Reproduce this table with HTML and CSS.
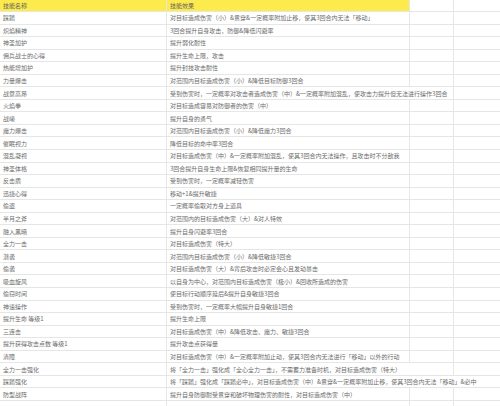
FILE: index.html
```html
<!DOCTYPE html>
<html lang="zh-CN">
<head>
<meta charset="utf-8">
<link rel="stylesheet" href="styles.css">
</head>
<body>
<div class="sheet">
  <div class="row head"><div class="c c1 y">技能名称</div><div class="c c2 y">技能效果</div><div class="c c3"></div><div class="c c4"></div></div>
  <div class="row"><div class="c c1">踩踏</div><div class="c c2">对目标造成伤害（小）&amp;贯穿&amp;一定概率附加止移，使其3回合内无法「移动」</div><div class="c c3"></div><div class="c c4"></div></div>
  <div class="row"><div class="c c1">炽焰精神</div><div class="c c2">3回合提升自身攻击，防御&amp;降低闪避率</div><div class="c c3"></div><div class="c c4"></div></div>
  <div class="row"><div class="c c1">神圣加护</div><div class="c c2">提升弱化耐性</div><div class="c c3"></div><div class="c c4"></div></div>
  <div class="row"><div class="c c1">佣兵战士的心得</div><div class="c c2">提升生命上限，攻击</div><div class="c c3"></div><div class="c c4"></div></div>
  <div class="row"><div class="c c1">热能增加护</div><div class="c c2">提升封技攻击耐性</div><div class="c c3"></div><div class="c c4"></div></div>
  <div class="row"><div class="c c1">力量爆击</div><div class="c c2">对范围内目标造成伤害（小）&amp;降低目标防御3回合</div><div class="c c3"></div><div class="c c4"></div></div>
  <div class="row"><div class="c c1">战意高昂</div><div class="c c2 span2">受到伤害时，一定概率对攻击者造成伤害（中）&amp;一定概率附加混乱，使攻击力提升但无法进行操作3回合</div><div class="c c4"></div></div>
  <div class="row"><div class="c c1">火焰拳</div><div class="c c2">对目标造成容易对防御者的伤害（中）</div><div class="c c3"></div><div class="c c4"></div></div>
  <div class="row"><div class="c c1">战嚎</div><div class="c c2">提升自身的勇气</div><div class="c c3"></div><div class="c c4"></div></div>
  <div class="row"><div class="c c1">魔力爆击</div><div class="c c2">对范围内目标造成伤害（小）&amp;降低魔力3回合</div><div class="c c3"></div><div class="c c4"></div></div>
  <div class="row"><div class="c c1">催眠视力</div><div class="c c2">降低目标的命中率3回合</div><div class="c c3"></div><div class="c c4"></div></div>
  <div class="row"><div class="c c1">混乱凝视</div><div class="c c2">对目标造成伤害（中）&amp;一定概率附加混乱，使其3回合内无法操作，且攻击时不分敌我</div><div class="c c3"></div><div class="c c4"></div></div>
  <div class="row"><div class="c c1">神圣体格</div><div class="c c2">3回合提升自身生命上限&amp;恢复相同提升量的生命</div><div class="c c3"></div><div class="c c4"></div></div>
  <div class="row"><div class="c c1">反击盾</div><div class="c c2">受到伤害时，一定概率减轻伤害</div><div class="c c3"></div><div class="c c4"></div></div>
  <div class="row"><div class="c c1">迅捷心得</div><div class="c c2">移动+1&amp;提升敏捷</div><div class="c c3"></div><div class="c c4"></div></div>
  <div class="row"><div class="c c1">偷盗</div><div class="c c2">一定概率偷取对方身上道具</div><div class="c c3"></div><div class="c c4"></div></div>
  <div class="row"><div class="c c1">半月之斧</div><div class="c c2">对范围内的目标造成伤害（大）&amp;对人特效</div><div class="c c3"></div><div class="c c4"></div></div>
  <div class="row"><div class="c c1">融入黑暗</div><div class="c c2">提升自身闪避率3回合</div><div class="c c3"></div><div class="c c4"></div></div>
  <div class="row"><div class="c c1">全力一击</div><div class="c c2">对目标造成伤害（特大）</div><div class="c c3"></div><div class="c c4"></div></div>
  <div class="row"><div class="c c1">潜袭</div><div class="c c2">对范围内目标造成伤害（小）&amp;降低敏捷3回合</div><div class="c c3"></div><div class="c c4"></div></div>
  <div class="row"><div class="c c1">偷袭</div><div class="c c2">对目标造成伤害（大）&amp;背后攻击时必定会心且发动暴击</div><div class="c c3"></div><div class="c c4"></div></div>
  <div class="row"><div class="c c1">吸血旋风</div><div class="c c2">以自身为中心，对范围内目标造成伤害（极小）&amp;回收所造成的伤害</div><div class="c c3"></div><div class="c c4"></div></div>
  <div class="row"><div class="c c1">偷窃时间</div><div class="c c2">使目标行动顺序延后&amp;提升自身敏捷3回合</div><div class="c c3"></div><div class="c c4"></div></div>
  <div class="row"><div class="c c1">神速操作</div><div class="c c2">受到伤害时，一定概率大幅提升自身敏捷1回合</div><div class="c c3"></div><div class="c c4"></div></div>
  <div class="row"><div class="c c1">提升生命 等级1</div><div class="c c2">提升生命上限</div><div class="c c3"></div><div class="c c4"></div></div>
  <div class="row"><div class="c c1">三连击</div><div class="c c2">对目标造成伤害（中）&amp;降低攻击、魔力、敏捷3回合</div><div class="c c3"></div><div class="c c4"></div></div>
  <div class="row"><div class="c c1">提升获得攻击点数 等级1</div><div class="c c2">提升攻击点获得量</div><div class="c c3"></div><div class="c c4"></div></div>
  <div class="row"><div class="c c1">清障</div><div class="c c2">对目标造成伤害（中）&amp;一定概率附加止动，使其3回合内无法进行「移动」以外的行动</div><div class="c c3"></div><div class="c c4"></div></div>
  <div class="row"><div class="c c1">全力一击强化</div><div class="c c2 span2">将「全力一击」强化成「全心全力一击」，不需蓄力准备时机，对目标造成伤害（特大）</div><div class="c c4"></div></div>
  <div class="row"><div class="c c1">踩踏强化</div><div class="c c2 span3">将「踩踏」强化成「踩踏必中」，对目标造成伤害（中）&amp;贯穿&amp;一定概率附加止移，使其3回合内无法「移动」&amp;必中</div></div>
  <div class="row"><div class="c c1">防型战阵</div><div class="c c2">提升自身防御耐受贯穿和破坏物理伤害的耐性，对目标造成伤害（中）</div><div class="c c3"></div><div class="c c4"></div></div>
  <div class="row"><div class="c c1"></div><div class="c c2"></div><div class="c c3"></div><div class="c c4"></div></div>
</div>
</body>
</html>
```
FILE: styles.css
```css
html, body {
  margin: 0;
  padding: 0;
  background: #ffffff;
}
.sheet {
  width: 500px;
  height: 406px;
  overflow: hidden;
  font-family: "Noto Sans CJK SC", "Noto Sans", sans-serif;
  font-size: 6px;
  color: #6b6b6b;
}
.row {
  display: grid;
  grid-template-columns: 167px 243px 44px 46px;
  height: 12.55px;
  box-sizing: border-box;
  border-bottom: 1px solid #e6e6e6;
}
.row.head {
  height: 12px;
}
.c {
  box-sizing: border-box;
  padding-left: 3px;
  white-space: nowrap;
  overflow: visible;
  display: flex;
  align-items: center;
}
.c1, .c2, .c3 {
  border-right: 1px solid #e6e6e6;
}
.span2 {
  grid-column: span 2;
}
.span3 {
  grid-column: span 3;
  border-right: none;
}
.y {
  background: #fdea4c;
  color: #666666;
}
```
